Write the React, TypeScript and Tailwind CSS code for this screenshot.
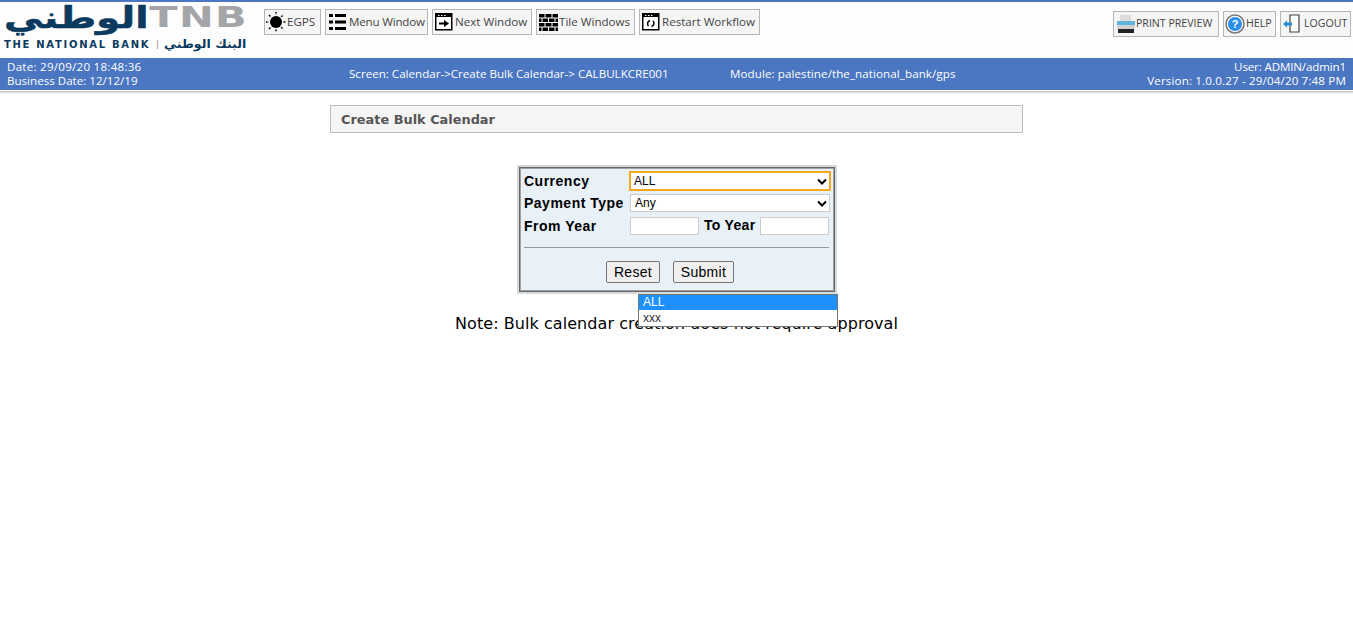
import React from "react";

const barFont = "font-['Open_Sans','Noto_Sans',sans-serif]";

function ToolButton({ icon, label, className, labelClass }: { icon: React.ReactNode; label: string; className: string; labelClass?: string }) {
  return (
    <div className={`flex h-[26px] items-center border border-[#b5b5b5] bg-[#f5f5f5] text-[#444] ${className}`}>
      {icon}
      <span className={`whitespace-nowrap ${labelClass ?? ""}`}>{label}</span>
    </div>
  );
}

const SunIcon = () => (
  <svg width="20" height="20" viewBox="0 0 20 20" className="mr-[1px]">
    <circle cx="10" cy="10" r="6" fill="#000" />
    <path d="M10 0v2.500M10 17.500V20M0 10h2.500M17.500 10H20M3 3l1.800 1.800M15.200 15.200L17 17M3 17l1.800-1.800M15.200 4.800L17 3" stroke="#000" strokeWidth="1.500" strokeDasharray="1.600 0.600" />
  </svg>
);

const MenuIcon = () => (
  <svg width="18" height="18" viewBox="0 0 18 18" className="mr-[3px]">
    <path d="M1 1h4v3H1zM7 1h11v3H7zM1 7.500h4v3H1zM7 7.500h11v3H7zM1 14h4v3H1zM7 14h11v3H7z" fill="#000" />
  </svg>
);

const NextIcon = () => (
  <svg width="18" height="18" viewBox="0 0 18 18" className="mr-[2px]">
    <rect x="0.750" y="0.750" width="16" height="16" fill="#fff" stroke="#000" strokeWidth="1.500" />
    <path d="M1 1h16v3H1z" fill="#000" />
    <path d="M3 2.500h1.500M6 2.500h1.500M9 2.500h1.500" stroke="#fff" />
    <path d="M4 9.500h5V7l5 3.500-5 3.500v-2.500H4z" fill="#000" />
  </svg>
);

const TileIcon = () => (
  <svg width="19" height="17" viewBox="0 0 19 17" className="mr-[1px]">
    <path d="M0 0h19v17H0z" fill="#000" />
    <path d="M0 4h19M0 8.500h19M0 13h19M6 0v4M13 0v4M3 4v4.500M9.500 4v4.500M16 4v4.500M6 8.500V13M13 8.500V13M3 13v4M9.500 13v4M16 13v4" stroke="#fff" strokeWidth="1" />
  </svg>
);

const RestartIcon = () => (
  <svg width="18" height="18" viewBox="0 0 18 18" className="mr-[2px]">
    <rect x="0.750" y="0.750" width="16" height="16" fill="#fff" stroke="#000" strokeWidth="1.500" />
    <path d="M1 1h16v3H1z" fill="#000" />
    <path d="M3 2.500h1.500M6 2.500h1.500M9 2.500h1.500" stroke="#fff" />
    <path d="M6.500 13a3.300 3.300 0 0 1 1.500-5.500M11 8a3.300 3.300 0 0 1-1.500 5.500" fill="none" stroke="#000" strokeWidth="1.500" />
  </svg>
);

const PrintIcon = () => (
  <svg width="20" height="19" viewBox="0 0 20 19">
    <path d="M4 0h11v6H4z" fill="#dcdcdc" />
    <path d="M1 6h18v4H1z" fill="#5fb4dc" />
    <path d="M1 10h18v4H1z" fill="#d2d2d2" />
    <path d="M2 14h16v4H2z" fill="#222" />
  </svg>
);

const HelpIcon = () => (
  <svg width="20" height="20" viewBox="0 0 20 20" className="mr-[1px]">
    <circle cx="10" cy="10" r="9" fill="#fff" stroke="#777" strokeWidth="1.500" />
    <circle cx="10" cy="10" r="7" fill="#2a8fe8" />
    <text x="10" y="14" textAnchor="middle" fontSize="11" fontWeight="700" fill="#fff" fontFamily="Liberation Sans">?</text>
  </svg>
);

const LogoutIcon = () => (
  <svg width="18" height="20" viewBox="0 0 18 20" className="mr-[3px]">
    <path d="M7 1h9v17H7z" fill="#fff" stroke="#444" strokeWidth="1.200" />
    <path d="M0 10l4-3.500V8.500h5v3H4v2z" fill="#1f8fd8" />
  </svg>
);

function Chevron() {
  return (
    <svg width="10" height="7" viewBox="0 0 10 7">
      <path d="M1 1.500l4 4 4-4" fill="none" stroke="#000" strokeWidth="2" />
    </svg>
  );
}

function Logo() {
  return (
    <div className="w-[246px] shrink-0 pl-[4px]">
      <div className="flex h-[35px]">
        <div className="w-[143px]">
          <span dir="rtl" className="inline-block origin-left scale-x-[1.3] font-['DejaVu_Sans',sans-serif] text-[30px] leading-[31px] font-bold text-[#0b3a5e] [-webkit-text-stroke:0.5px_#0b3a5e]">الوطني</span>
        </div>
        <span className="ml-auto inline-block origin-right translate-x-[2px] scale-x-[1.43] font-['DejaVu_Sans',sans-serif] text-[29px] leading-[31px] font-bold tracking-[1px] whitespace-nowrap text-[#a3a5a8]">TNB</span>
      </div>
      <div className="flex h-[14px] items-center whitespace-nowrap">
        <span className="w-[151px] font-['DejaVu_Sans',sans-serif] text-[10px] font-bold tracking-[1.700px] text-[#0b3a5e]">THE NATIONAL BANK</span>
        <span className="text-[9px] text-[#777]">|</span>
        <span dir="rtl" className="ml-auto inline-block origin-right scale-x-[1.05] font-['DejaVu_Sans',sans-serif] text-[12px] font-bold text-[#0b3a5e]">البنك الوطني</span>
      </div>
    </div>
  );
}

export default function App() {
  return (
    <div className="min-h-[633px] bg-white">
      <div className={`flex h-[58px] border-t-2 border-[#4a76c2] bg-[#fdfdfd] text-[11.600px] ${barFont}`}>
        <Logo />
        <div className="ml-[18px] flex gap-[4px] pt-[7px]">
          <ToolButton className="w-[57px] pl-[1px]" icon={<SunIcon />} label="EGPS" />
          <ToolButton className="w-[103px] pl-[2px]" labelClass="tracking-[-0.200px]" icon={<MenuIcon />} label="Menu Window" />
          <ToolButton className="w-[100px] pl-[2px]" icon={<NextIcon />} label="Next Window" />
          <ToolButton className="w-[99px] pl-[2px]" icon={<TileIcon />} label="Tile Windows" />
          <ToolButton className="w-[121px] pl-[2px]" icon={<RestartIcon />} label="Restart Workflow" />
        </div>
        <div className="ml-auto flex gap-[4px] pt-[9px] pr-[2px] text-[10.600px]">
          <ToolButton className="w-[106px] pl-[2px]" icon={<PrintIcon />} label="PRINT PREVIEW" />
          <ToolButton className="w-[53px] pl-[1px]" icon={<HelpIcon />} label="HELP" />
          <ToolButton className="w-[71px] pl-[2px]" icon={<LogoutIcon />} label="LOGOUT" />
        </div>
      </div>

      <div className={`flex h-[32px] items-center bg-[#4a76c2] text-[11.600px] leading-[14px] text-white ${barFont}`}>
        <div className="w-[349px] pl-[7px]">
          <div className="tracking-[0.250px]">Date: 29/09/20 18:48:36</div>
          <div>Business Date: 12/12/19</div>
        </div>
        <div className="w-[381px]">Screen: Calendar-&gt;Create Bulk Calendar-&gt; CALBULKCRE001</div>
        <div className="tracking-[0.080px]">Module: palestine/the_national_bank/gps</div>
        <div className="ml-auto pr-[7px] text-right">
          <div className="tracking-[-0.150px]">User: ADMIN/admin1</div>
          <div className="tracking-[0.150px]">Version: 1.0.0.27 - 29/04/20 7:48 PM</div>
        </div>
      </div>
      <div className="mt-[1px] h-[3px] bg-linear-to-b from-[#bdbdbd] to-white" />

      <div className="mx-auto mt-[11px] flex h-[28px] w-[693px] items-center border border-[#bdbdbd] bg-[#f5f5f5] pt-[1px] pl-[10px] font-['DejaVu_Sans',sans-serif] text-[12.900px] font-bold text-[#555]">
        Create Bulk Calendar
      </div>

      <div className="relative mt-[32px] ml-[517px] h-[129px] w-[320px] border-2 border-[#d6dbe0] font-['Liberation_Sans',sans-serif]">
        <div className="h-full border border-[#666] bg-[#e8f0f8] pt-[1px] pr-[2px] pl-[4px] shadow-[inset_0_0_0_1px_#a0a0a0]">
          <div className="flex h-[24px] items-center">
            <span className="w-[105px] text-[14px] font-bold tracking-[0.500px] text-black">Currency</span>
            <div className="flex h-[20px] w-[202px] items-center justify-between border-2 border-[#f5a81c] bg-white pr-[2px] pl-[3px] text-[12px] text-black">
              ALL
              <Chevron />
            </div>
          </div>
          <div className="flex h-[20px] items-center">
            <span className="w-[106px] text-[14px] font-bold tracking-[0.500px] whitespace-nowrap text-black">Payment Type</span>
            <div className="flex h-[18px] w-[200px] items-center justify-between border border-[#ccc] bg-white pr-[2px] pl-[4px] text-[12px] text-black">
              Any
              <Chevron />
            </div>
          </div>
          <div className="flex h-[26px] items-center">
            <span className="w-[106px] text-[14px] font-bold tracking-[0.500px] text-black">From Year</span>
            <div className="h-[18px] w-[69px] border border-[#ccc] bg-white" />
            <span className="ml-[5px] w-[56px] -translate-y-[1px] text-[14px] font-bold tracking-[0.300px] whitespace-nowrap text-black">To Year</span>
            <div className="h-[18px] w-[69px] border border-[#ccc] bg-white" />
          </div>
          <div className="mt-[8px] mr-[3px] h-px bg-[#999]" />
          <div className="mt-[13px] flex gap-[13px] pl-[82px]">
            <div className="flex h-[22px] w-[54px] items-center justify-center rounded-[2px] border border-[#777] bg-[#efefef] text-[14px] tracking-[0.300px] text-black">Reset</div>
            <div className="flex h-[22px] w-[61px] items-center justify-center rounded-[2px] border border-[#777] bg-[#efefef] text-[14px] tracking-[0.300px] text-black">Submit</div>
          </div>
        </div>

        <div className="absolute top-[127px] left-[119px] z-10 w-[200px] border border-[#777] bg-white text-[12px]">
          <div className="flex h-[15px] items-center bg-[#1e90ff] pb-[1px] pl-[4px] text-white">ALL</div>
          <div className="flex h-[16px] items-center pb-[1px] pl-[4px] text-[#333]">xxx</div>
        </div>
      </div>

      <div className="mt-[20px] text-center font-['DejaVu_Sans',sans-serif] text-[16px] leading-[20px] tracking-[0.060px] text-black">
        Note: Bulk calendar creation does not require approval
      </div>
    </div>
  );
}
